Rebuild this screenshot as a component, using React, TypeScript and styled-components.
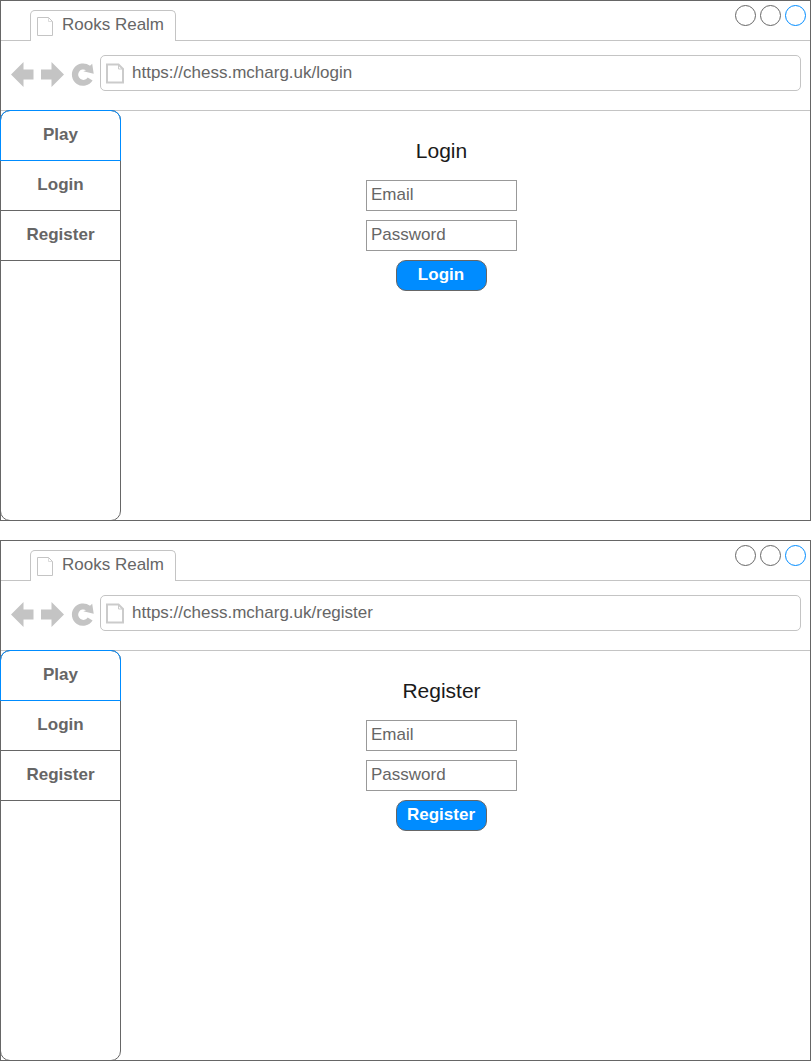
import React from "react";
import styled, { createGlobalStyle } from "styled-components";

const GlobalStyle = createGlobalStyle`
  * { box-sizing: border-box; }
  body {
    margin: 0;
    background: #fff;
    color: #666;
    font-family: "Liberation Sans", Arial, sans-serif;
    font-size: 17px;
  }
`;

const Page = styled.main`
  display: flex;
  flex-direction: column;
  gap: 19px;
  width: 811px;
`;

const Window = styled.section`
  display: flex;
  flex-direction: column;
  height: 521px;
  border: 1px solid #666;
`;

const TabBar = styled.header`
  display: flex;
  justify-content: space-between;
  height: 40px;
  padding-left: 29px;
  border-bottom: 1px solid #c4c4c4;
`;

const Tab = styled.div`
  display: flex;
  width: 146px;
  height: 31px;
  margin-top: 9px;
  padding-left: 6px;
  gap: 7px;
  line-height: 28px;
  background: #fff;
  border: 1px solid #c4c4c4;
  border-bottom: 0;
  border-radius: 5px 5px 0 0;
  white-space: nowrap;

  svg { margin-top: 6px; }
`;

const WindowButtons = styled.div`
  display: flex;
  gap: 4px;
  padding: 4px 4px 0 0;
`;

const WindowButton = styled.span<{ $active?: boolean }>`
  width: 21px;
  height: 21px;
  border: 1px solid ${(p) => (p.$active ? "#008cff" : "#666")};
  border-radius: 50%;
`;

const Toolbar = styled.div`
  display: flex;
  height: 70px;
  padding: 14px 9px 0 9px;
  border-bottom: 1px solid #c4c4c4;
`;

const NavIcons = styled.svg`
  flex: none;
  width: 90px;
  height: 36px;
  fill: #c4c4c4;
`;

const AddressBar = styled.div`
  display: flex;
  flex: 1;
  gap: 8px;
  height: 36px;
  padding-left: 5px;
  line-height: 34px;
  border: 1px solid #c4c4c4;
  border-radius: 5px;

  svg { margin-top: 7px; }
`;

const Body = styled.div`
  display: flex;
  flex: 1;
  margin: -1px 0 -1px -1px;
`;

const Sidebar = styled.nav`
  width: 121px;
  border: 1px solid #666;
  border-radius: 10px;
`;

const MenuItem = styled.div<{ $active?: boolean }>`
  height: ${(p) => (p.$active ? 51 : 50)}px;
  margin: ${(p) => (p.$active ? "-1px -1px 0" : "0")};
  line-height: 47px;
  font-weight: bold;
  text-align: center;
  border: solid ${(p) => (p.$active ? "#008cff" : "#666")};
  border-width: ${(p) => (p.$active ? "1px" : "0 0 1px")};
  border-radius: ${(p) => (p.$active ? "10px 10px 0 0" : "0")};
`;

const Form = styled.div`
  display: flex;
  flex-direction: column;
  align-items: center;
  width: 151px;
  margin: 25px 0 0 245px;
`;

const Title = styled.h1`
  height: 30px;
  margin: 0 0 15px;
  line-height: 31px;
  font-size: 21px;
  font-weight: normal;
  color: #1a1a1a;
`;

const Field = styled.div`
  width: 151px;
  height: 31px;
  margin-bottom: 9px;
  padding-left: 4px;
  line-height: 27px;
  border: 1px solid #999;
`;

const Submit = styled.div`
  width: 91px;
  height: 31px;
  padding-right: 1px;
  line-height: 27px;
  text-align: center;
  font-weight: bold;
  color: #fff;
  background: #008cff;
  border: 1px solid #666;
  border-radius: 10px;
`;

function TabPageIcon() {
  return (
    <svg width="18" height="20" fill="none" stroke="#c4c4c4">
      <path d="M.5.5H11.5L15.5 4.5V18.5H.5Z" />
      <path d="M11.5.5V4.5H15.5" strokeOpacity=".6" />
    </svg>
  );
}

function AddressPageIcon() {
  return (
    <svg width="18" height="21" fill="none" stroke="#cbcbcb" strokeWidth="2">
      <path d="M1 1.5H12.5L17 6V19.5H1Z" />
      <path d="M12.5 1.5V6H17" strokeWidth="1" />
    </svg>
  );
}

function BrowserWindow({ title, path }: { title: string; path: string }) {
  return (
    <Window>
      <TabBar>
        <Tab>
          <TabPageIcon />
          Rooks Realm
        </Tab>
        <WindowButtons>
          <WindowButton />
          <WindowButton />
          <WindowButton $active />
        </WindowButtons>
      </TabBar>
      <Toolbar>
        <NavIcons viewBox="10 55 90 36">
          <path d="M11 74.5L23.5 62V69.5H33.5V79.5H23.5V87Z" />
          <path d="M64 74.5L51.5 62V69.5H41V79.5H51.5V87Z" />
          <path d="M93.7 73.8L83.3 71.2L86 70.2A5.2 5.2 0 1 0 87.7 77.5L92.6 80.5A11.2 11.2 0 1 1 90 65.8L92.2 63.8Z" />
        </NavIcons>
        <AddressBar>
          <AddressPageIcon />
          https://chess.mcharg.uk/{path}
        </AddressBar>
      </Toolbar>
      <Body>
        <Sidebar>
          <MenuItem $active>Play</MenuItem>
          <MenuItem>Login</MenuItem>
          <MenuItem>Register</MenuItem>
        </Sidebar>
        <Form>
          <Title>{title}</Title>
          <Field>Email</Field>
          <Field>Password</Field>
          <Submit>{title}</Submit>
        </Form>
      </Body>
    </Window>
  );
}

export default function App() {
  return (
    <>
      <GlobalStyle />
      <Page>
        <BrowserWindow title="Login" path="login" />
        <BrowserWindow title="Register" path="register" />
      </Page>
    </>
  );
}
